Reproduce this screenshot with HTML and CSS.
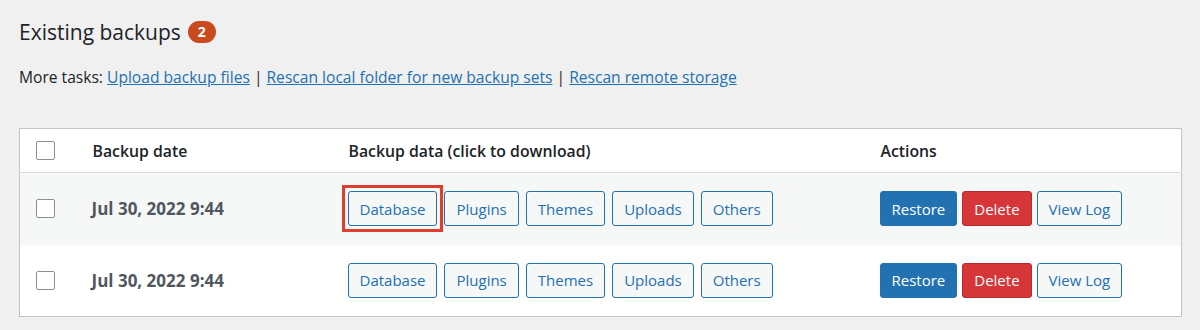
FILE: index.html
```html
<!DOCTYPE html>
<html>
  <head>
    <meta charset="UTF-8" />
    <title>Existing backups</title>
    <link rel="stylesheet" href="styles.css">
  </head>

  <body>
    <div class="wrap">
      <h2 class="title">Existing backups <span class="count">2</span></h2>

      <p class="tasks">
        More tasks:
        <a href="#">Upload backup files</a> |
        <a href="#">Rescan local folder for new backup sets</a> |
        <a href="#">Rescan remote storage</a>
      </p>

      <table class="backups">
        <colgroup>
          <col class="col-check" />
          <col class="col-date" />
          <col class="col-data" />
          <col class="col-actions" />
        </colgroup>
        <thead>
          <tr>
            <th class="check"><span class="checkbox"></span></th>
            <th>Backup date</th>
            <th>Backup data (click to download)</th>
            <th>Actions</th>
          </tr>
        </thead>
        <tbody>
          <tr class="alt">
            <td class="check"><span class="checkbox"></span></td>
            <td class="date">Jul 30, 2022 9:44</td>
            <td>
              <div class="buttons">
                <button class="btn highlight">Database</button>
                <button class="btn">Plugins</button>
                <button class="btn">Themes</button>
                <button class="btn">Uploads</button>
                <button class="btn">Others</button>
              </div>
            </td>
            <td>
              <div class="buttons actions">
                <button class="btn primary">Restore</button>
                <button class="btn danger">Delete</button>
                <button class="btn">View Log</button>
              </div>
            </td>
          </tr>
          <tr>
            <td class="check"><span class="checkbox"></span></td>
            <td class="date">Jul 30, 2022 9:44</td>
            <td>
              <div class="buttons">
                <button class="btn">Database</button>
                <button class="btn">Plugins</button>
                <button class="btn">Themes</button>
                <button class="btn">Uploads</button>
                <button class="btn">Others</button>
              </div>
            </td>
            <td>
              <div class="buttons actions">
                <button class="btn primary">Restore</button>
                <button class="btn danger">Delete</button>
                <button class="btn">View Log</button>
              </div>
            </td>
          </tr>
        </tbody>
      </table>
    </div>
  </body>
</html>
```

FILE: styles.css
```css
* {
  box-sizing: border-box;
}

body {
  margin: 0;
  font-family: "Open Sans", "Liberation Sans", sans-serif;
  background-color: #f0f0f1;
  color: #1d2327;
}

.wrap {
  padding: 18px 18px 0 19px;
}

.title {
  display: flex;
  align-items: center;
  font-size: 21px;
  font-weight: 400;
  line-height: 28px;
  margin: 0;
}

.count {
  display: inline-flex;
  justify-content: center;
  align-items: center;
  min-width: 28px;
  height: 22px;
  margin-left: 7px;
  border-radius: 11px;
  background-color: #ca4a1f;
  color: #fff;
  font-size: 14px;
  font-weight: 700;
}

.tasks {
  font-size: 15.6px;
  line-height: 22px;
  margin: 20px 0 40px;
}

.tasks a {
  color: #2271b1;
}

.backups {
  width: 1163px;
  table-layout: fixed;
  border-collapse: collapse;
  background-color: #fff;
  border: 1px solid #c3c4c7;
  font-size: 15.8px;
}

.col-check {
  width: 55px;
}

.col-date {
  width: 256px;
}

.col-data {
  width: 532px;
}

.backups th {
  text-align: left;
  font-weight: 600;
  height: 44px;
  padding: 0 18px;
  border-bottom: 1px solid #dcdcde;
}

.backups td {
  height: 72px;
  padding: 0 17px;
}

.backups tr.alt td {
  background-color: #f6f7f7;
}

.backups .check {
  padding: 0 0 0 16px;
}

.checkbox {
  display: block;
  width: 19px;
  height: 19px;
  border: 1px solid #8c8f94;
  border-radius: 2px;
  background-color: #fff;
}

.date {
  font-size: 17px;
  font-weight: 700;
  color: #50575e;
}

.buttons {
  display: flex;
  align-items: center;
  gap: 7px;
}

.buttons.actions {
  gap: 5px;
}

.btn {
  font-family: inherit;
  font-size: 15px;
  height: 35px;
  padding: 0 11px;
  border: 1px solid #2271b1;
  border-radius: 3px;
  background-color: #f6f7f7;
  color: #2271b1;
  cursor: pointer;
}

.btn.primary {
  background-color: #2271b1;
  color: #fff;
}

.btn.danger {
  background-color: #d63638;
  border-color: #b32d2e;
  color: #fff;
}

.btn.highlight {
  position: relative;
}

/* red callout box drawn over the button */
.btn.highlight::after {
  content: "";
  position: absolute;
  top: -7px;
  right: -7px;
  bottom: -7px;
  left: -7px;
  border: 3px solid #e03e2d;
}
```
